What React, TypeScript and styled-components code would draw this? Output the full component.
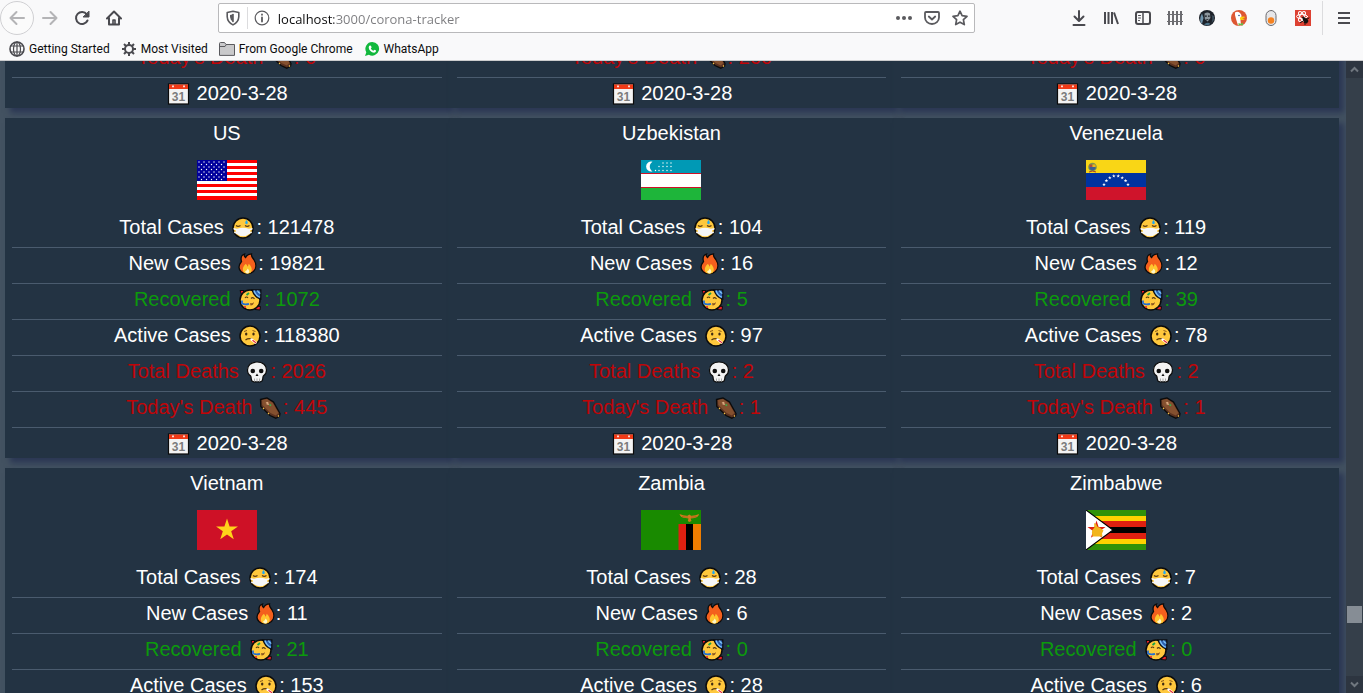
import React, { useLayoutEffect, useRef } from "react";
import styled, { createGlobalStyle } from "styled-components";

const GlobalStyle = createGlobalStyle`
  * { box-sizing: border-box; }
  body { margin: 0; background: #f9f9fa; overflow: hidden; }
`;

const uiFont = `"Open Sans", "Noto Sans", sans-serif`;

/* ---------- browser chrome ---------- */

const Shell = styled.div`
  display: flex;
  flex-direction: column;
  height: 100vh;
`;

const Chrome = styled.header`
  flex: none;
  background: #f9f9fa;
  border-bottom: 1px solid #ccccce;
  font-family: ${uiFont};
`;

const NavBar = styled.nav`
  display: flex;
  align-items: center;
  height: 36px;
`;

const ToolButton = styled.button<{ $round?: boolean }>`
  display: flex;
  flex: none;
  align-items: center;
  justify-content: center;
  width: ${(p) => (p.$round ? 34 : 32)}px;
  height: ${(p) => (p.$round ? 34 : 32)}px;
  padding: 0;
  border: ${(p) => (p.$round ? "1px solid #d0d0d3" : "0")};
  border-radius: ${(p) => (p.$round ? "50%" : "2px")};
  background: ${(p) => (p.$round ? "#fbfbfb" : "transparent")};
`;

const Spacer = styled.div`
  flex: 88 1 0;
`;

const UrlBar = styled.div`
  display: flex;
  flex: 757 1 0;
  align-items: center;
  height: 30px;
  border: 1px solid #b9b9bb;
  border-radius: 2px;
  background: #fff;
`;

const UrlButton = styled.button`
  display: flex;
  flex: none;
  align-items: center;
  justify-content: center;
  width: 28px;
  height: 28px;
  padding: 0;
  border: 0;
  background: transparent;
`;

const UrlDivider = styled.span`
  width: 1px;
  height: 22px;
  background: #dcdcde;
`;

const UrlInput = styled.input`
  flex: 1;
  min-width: 0;
  height: 28px;
  padding: 2px 2px 0;
  border: 0;
  outline: 0;
  font-family: ${uiFont};
  font-size: 13px;
  color: transparent;
  background: linear-gradient(90deg, #0c0c0d 58px, #7b7b7e 58px);
  background-clip: text;
  -webkit-background-clip: text;
`;

const MenuDivider = styled.span`
  width: 1px;
  height: 34px;
  margin: 0 5px 0 3px;
  background: #dcdcde;
`;

const MenuEnd = styled.span`
  flex: none;
  width: 3px;
`;

const Bookmarks = styled.div`
  display: flex;
  align-items: center;
  gap: 11px;
  height: 24px;
  padding: 2px 0 0 9px;
`;

const Bookmark = styled.a`
  display: flex;
  align-items: center;
  gap: 4px;
  font-family: Roboto, sans-serif;
  font-size: 12px;
  line-height: 16px;
  white-space: nowrap;
  color: #0c0c0d;
  text-decoration: none;
`;

/* ---------- page ---------- */

const Viewport = styled.div`
  display: flex;
  flex: 1;
  min-height: 0;
`;

const ScrollPane = styled.main`
  flex: 1;
  min-width: 0;
  overflow: hidden;
  background: #435261;
`;

const CardGrid = styled.section`
  display: grid;
  grid-template-columns: repeat(3, 1fr);
  row-gap: 10px;
  padding: 0 7px 10px 5px;
`;

const Card = styled.article`
  padding: 0 8px 0 7px;
  background: #233343;
  box-shadow: 5px 5px 6px #2b3754;
  font-family: "Liberation Sans", Arial, sans-serif;
  font-size: 20px;
  line-height: 30px;
  text-align: center;
  color: #fff;
`;

const CountryName = styled.h2`
  margin: 0;
  font-size: 20px;
  font-weight: 400;
  line-height: 30px;
`;

const FlagBox = styled.svg`
  display: block;
  width: 60px;
  height: 40px;
  margin: 12px auto;
`;

const StatRow = styled.p<{ $color?: string }>`
  margin: 0;
  padding-bottom: 5px;
  border-bottom: 1px solid #4a5b6e;
  white-space: nowrap;
  color: ${(p) => p.$color || "#fff"};
`;

const DateRow = styled.p`
  margin: 0;
`;

const Emoji = styled.svg<{ $width?: number }>`
  width: ${(p) => p.$width || 25}px;
  height: 22px;
  vertical-align: -5px;
`;

const ScrollTrack = styled.div`
  display: flex;
  flex: none;
  flex-direction: column;
  width: 17px;
  background: #353f4a;
`;

const ScrollButton = styled.button`
  display: flex;
  align-items: center;
  justify-content: center;
  height: 17px;
  padding: 0;
  border: 0;
  background: #2d3540;
`;

const ScrollLane = styled.div`
  display: flex;
  flex: 1;
  flex-direction: column;
`;

const ScrollGap = styled.div<{ $grow: number }>`
  flex: ${(p) => p.$grow} 1 0;
`;

const ScrollThumb = styled.div`
  height: 17px;
  margin: 0 1px;
  background: #868d95;
`;

/* ---------- emoji drawings ---------- */

const Face = () => (
  <circle cx="12" cy="11" r="10" fill="#ffc83d" stroke="#0b0b0b" strokeWidth="1.5" />
);

const MaskIcon = () => (
  <Emoji $width={27} viewBox="-2 0 27 22" aria-hidden="true">
    <Face />
    <path d="M5 8.500q2 1.600 4.500 0M14 8.500q2.200 1.600 4.500 0" fill="none" stroke="#5b3a12" strokeWidth="1.200" />
    <path d="M2.500 11l3.500.8q6-2.300 12 0l3.500-.8v1.500L19 13.500v3q-7 5.600-14 0v-3l-2.500-1z" fill="#f6f6f6" />
    <path d="M3.200 15.200l3 .8M20.800 15.200l-3 .8" stroke="#f6f6f6" strokeWidth="1.500" />
    <path d="M15.500 3q2.600 3.500 0 4.200q-2.600-.7 0-4.200z" fill="#20a8f4" />
  </Emoji>
);

const FireIcon = () => (
  <Emoji $width={22} viewBox="-1 0 22 22" aria-hidden="true">
    <path d="M4.500 8.500C3.500 5 4.500 2 7.500 1c-.6 1.600.2 3 1 3.600C9.500 2.500 12 .9 14.500.8c-.6 2.400.8 3.600 2.300 5.700 2.700 4.200 2.700 9-.4 12-3.200 2.900-9.200 2.900-12.200.2C1.200 15.900 1.600 12 4.500 8.500z" fill="#f4601d" stroke="#0b0b0b" strokeWidth="1.300" />
    <path d="M8.500 11c1.500.2 1.700 1.800 1.800 2.800 1-1 1.400-1.900 1.200-3.100 2.700 2 4.400 6 2.500 8.500-2 2-5.800 2-7.500-.1-1.500-2.300-.6-5.600 2-8.100z" fill="#ffc52e" />
    <path d="M10.500 15.500c2 1.800 2.500 3.600.9 4.800-1.800.5-3.500-.5-3.100-2.300.8.200 2-.8 2.200-2.500z" fill="#fff6c8" />
  </Emoji>
);

const PartyIcon = () => (
  <Emoji $width={28} viewBox="-2 0 28 22" aria-hidden="true">
    <path d="M2 1.500h4l-2 5zM19 17l3.500.5-.5 3.500-5-.5z" fill="#e8202a" stroke="#0b0b0b" />
    <Face />
    <path d="M14 .8h8.800v9.400q-7-2.200-8.800-9.400z" fill="#2c5fb0" stroke="#0b0b0b" strokeWidth="1.200" />
    <path d="M16 1.500q1.500 5 6 6.800M19.500 1.500q.6 2 2.800 3" stroke="#82c5f5" strokeWidth="1.200" fill="none" />
    <path d="M7 9q1.500-2 3 0M13 9.500q1.800-2 3.500.5" fill="none" stroke="#5b3a12" strokeWidth="1.200" />
    <path d="M4 11.500v3q3 1.500 7 .3" fill="none" stroke="#246fd1" strokeWidth="1.800" />
    <path d="M12 14q2.500 1 4-1-.5 3.500-3.500 3.500z" fill="#8a5520" />
    <path d="M8.500 6l2.500-2" stroke="#19a348" strokeWidth="1.800" />
    <circle cx="7" cy="18" r="1" fill="#e8202a" />
  </Emoji>
);

const SickIcon = () => (
  <Emoji $width={27} viewBox="-2 0 27 22" aria-hidden="true">
    <Face />
    <path d="M6 6.500l3-1M14.500 5.500l3 1" stroke="#8a5b1b" />
    <ellipse cx="8.200" cy="9" rx="1.200" ry="1.600" fill="#3f2a12" />
    <ellipse cx="15.500" cy="9" rx="1.200" ry="1.600" fill="#3f2a12" />
    <path d="M7.500 15q3-2.200 6.500-.8" fill="none" stroke="#5b3a12" strokeWidth="1.300" />
    <path d="M13.500 14.500l4 3" stroke="#fff" strokeWidth="2.400" strokeLinecap="round" />
    <path d="M14.500 15.300l3.500 2.500" stroke="#e52b35" strokeWidth="1.200" />
  </Emoji>
);

const SkullIcon = () => (
  <Emoji $width={26} viewBox="-1 0 26 22" aria-hidden="true">
    <path d="M12 1c-6 0-9.500 3.500-9.500 8 0 2.800.8 4.500 3 5.800.6.500.5 1.500.8 3.200.2 1.500 1 2.800 2.500 2.800h6.400c1.500 0 2.300-1.300 2.500-2.800.3-1.700.2-2.700.8-3.200 2.200-1.300 3-3 3-5.800 0-4.500-3.500-8-9.500-8z" fill="#f3f3f3" stroke="#0b0b0b" strokeWidth="1.200" />
    <circle cx="7.800" cy="10" r="2.300" fill="#101010" />
    <circle cx="16.200" cy="10" r="2.300" fill="#101010" />
    <path d="M12 12.500l1.500 2.500h-3z" fill="#101010" />
    <path d="M9.500 17.500v3M12 17.500v3M14.500 17.500v3" stroke="#aaa" />
  </Emoji>
);

const CoffinIcon = () => (
  <Emoji viewBox="0 0 25 22" aria-hidden="true">
    <path d="M2.500 2.500L9 .9l6.500 4L22 16.500l-.5 2.700-3.700 2L12 18.500 2.800 9.500z" fill="#5b3220" stroke="#0b0b0b" strokeWidth="1.300" />
    <path d="M4 3l5-1 5.800 4L20.500 16l-2.700 2.500L12.500 16 4.300 8z" fill="#84502f" />
    <path d="M8 5.500l3 2M10 5L8.800 7.500" stroke="#d8a77f" strokeWidth="1.200" />
    <path d="M11.500 7.500l1.500 1.200" stroke="#35b44a" strokeWidth="1.600" />
    <path d="M5 11l1 1M10 16l1 1M20 19.500l1-1" stroke="#f2c14b" strokeWidth="1.200" />
  </Emoji>
);

const CalendarIcon = () => (
  <Emoji viewBox="0 0 25 22" aria-hidden="true">
    <rect x="2.500" y="1" width="20" height="20" fill="#f3f3f3" stroke="#0b0b0b" strokeWidth="1.200" />
    <rect x="3" y="1.500" width="19" height="4.500" fill="#f03a17" />
    <path d="M7 2.500v1.800M18 2.500v1.800" stroke="#fff" strokeWidth="1.600" />
    <text x="12.500" y="17.500" textAnchor="middle" fontFamily="Liberation Sans, Arial, sans-serif" fontSize="12" fontWeight="700" fill="#7c7c7c">31</text>
  </Emoji>
);

/* ---------- flags ---------- */

const starPath = (cx: number, cy: number, r: number, turn = 0) => {
  const pts: string[] = [];
  for (let i = 0; i < 10; i++) {
    const a = ((i * 36 - 90 + turn) * Math.PI) / 180;
    const k = i % 2 ? r * 0.382 : r;
    pts.push(`${(cx + k * Math.cos(a)).toFixed(2)},${(cy + k * Math.sin(a)).toFixed(2)}`);
  }
  return `M${pts.join("L")}Z`;
};

const usStars: [number, number][] = [];
for (let r = 0; r < 8; r++) {
  for (let c = 0; c < (r % 2 ? 5 : 6); c++) usStars.push([2 + c * 5 + (r % 2 ? 2.5 : 0), 2 + r * 2.5]);
}

const FlagUS = () => (
  <>
    <rect width="60" height="40" fill="#fff" />
    {[0, 6, 12, 18, 24, 30, 36].map((y) => (
      <rect key={y} y={y} width="60" height={y === 36 ? 4 : 3} fill="#f00" />
    ))}
    <rect width="30" height="21" fill="#00009c" />
    {usStars.map(([x, y]) => (
      <circle key={`${x}-${y}`} cx={x} cy={y} r=".7" fill="#fff" />
    ))}
  </>
);

const FlagUzbekistan = () => (
  <>
    <rect width="60" height="40" fill="#fff" />
    <rect width="60" height="13" fill="#0099b5" />
    <rect y="28" width="60" height="12" fill="#1eb53a" />
    <rect y="13" width="60" height="1" fill="#ce1126" />
    <rect y="27" width="60" height="1" fill="#ce1126" />
    <path d="M11.500 1.800a5 5 0 1 0 0 9.600a5.600 5.600 0 0 1 0-9.600z" fill="#fff" />
    {[[22, 3], [26, 3], [30, 3], [18, 6.5], [22, 6.5], [26, 6.5], [30, 6.5], [14.5, 10.5], [18, 10.5], [22, 10.5], [26, 10.5], [30, 10.5]].map(([x, y]) => (
      <circle key={`${x}-${y}`} cx={x} cy={y} r=".7" fill="#fff" />
    ))}
  </>
);

const FlagVenezuela = () => (
  <>
    <rect width="60" height="13" fill="#f9d616" />
    <rect y="13" width="60" height="14" fill="#0033a0" />
    <rect y="27" width="60" height="13" fill="#cf142b" />
    {[[18, 24.5], [20.4, 20.7], [23.8, 17.8], [27.8, 16], [32.2, 16], [36.2, 17.8], [39.6, 20.7], [42, 24.5]].map(([x, y]) => (
      <path key={x} d={starPath(x, y, 1.9)} fill="#fff" />
    ))}
    <circle cx="6.500" cy="7" r="4.300" fill="#7c9450" />
    <path d="M3.500 4.500h3v2.500h-3z" fill="#b34a38" />
    <path d="M6.500 4.500h3v2.500h-3z" fill="#efb416" />
    <path d="M3.500 7h6v2q-3 2.500-6 0z" fill="#3d5f8f" />
    <path d="M3 12l3.500-1 3.500 1" stroke="#a33c28" fill="none" />
  </>
);

const FlagVietnam = () => (
  <>
    <rect width="60" height="40" fill="#ce1126" />
    <path d={starPath(30, 20, 11.5)} fill="#ffd21a" />
  </>
);

const FlagZambia = () => (
  <>
    <rect width="60" height="40" fill="#198a00" />
    <rect x="37.500" y="14" width="7.500" height="26" fill="#de2010" />
    <rect x="45" y="14" width="7" height="26" fill="#000" />
    <rect x="52" y="14" width="8" height="26" fill="#ef7d00" />
    <path d="M38.500 4q4 2 8 1.800l1.800-1.300 1.800 1.300q4 .2 8-1.800-1 4-6 4.200l-2.500.3.900 2.500-2.200 1-1.500-1 .7-2.500-3-.4Q39.500 8 38.500 4z" fill="#cf7a1c" />
    <path d="M41 6.500q3 1 6 .5M50 7q3 .5 5.500-.5" stroke="#9a5f14" strokeWidth=".6" fill="none" />
  </>
);

const FlagZimbabwe = () => (
  <>
    <rect width="60" height="40" fill="#319208" />
    <rect y="6" width="60" height="28" fill="#ffd200" />
    <rect y="11" width="60" height="18" fill="#de2010" />
    <rect y="17" width="60" height="6" fill="#000" />
    <path d="M0 0L27 20L0 40z" fill="#fff" />
    <path d="M0 0L27 20L0 40" fill="none" stroke="#000" strokeWidth="1.100" />
    <path d={starPath(10.5, 20, 9.5)} fill="#de2010" />
    <path d="M8 13l2.500 1.500q.5 3 3 3l4 3-1.500 3 .5 3H6.500l-.6-4q.3-3.500 2.600-5z" fill="#f2b51c" />
  </>
);

const Blank = () => <rect width="60" height="40" fill="#fff" />;

/* ---------- data ---------- */

type Country = {
  name: string;
  flag: React.FC;
  total: number;
  fresh: number;
  recovered: number;
  active: number;
  deaths: number;
  today: number;
};

const countries: Country[] = [
  { name: "UAE", flag: Blank, total: 468, fresh: 63, recovered: 52, active: 414, deaths: 2, today: 0 },
  { name: "UK", flag: Blank, total: 17089, fresh: 2546, recovered: 135, active: 15935, deaths: 1019, today: 260 },
  { name: "Uruguay", flag: Blank, total: 274, fresh: 36, recovered: 0, active: 274, deaths: 0, today: 0 },
  { name: "US", flag: FlagUS, total: 121478, fresh: 19821, recovered: 1072, active: 118380, deaths: 2026, today: 445 },
  { name: "Uzbekistan", flag: FlagUzbekistan, total: 104, fresh: 16, recovered: 5, active: 97, deaths: 2, today: 1 },
  { name: "Venezuela", flag: FlagVenezuela, total: 119, fresh: 12, recovered: 39, active: 78, deaths: 2, today: 1 },
  { name: "Vietnam", flag: FlagVietnam, total: 174, fresh: 11, recovered: 21, active: 153, deaths: 0, today: 0 },
  { name: "Zambia", flag: FlagZambia, total: 28, fresh: 6, recovered: 0, active: 28, deaths: 0, today: 0 },
  { name: "Zimbabwe", flag: FlagZimbabwe, total: 7, fresh: 2, recovered: 0, active: 6, deaths: 1, today: 0 },
];

const green = "#0c9a0c";
const red = "#c00508";

const CountryCard = ({ c }: { c: Country }) => {
  const Flag = c.flag;
  return (
    <Card>
      <CountryName>{c.name}</CountryName>
      <FlagBox viewBox="0 0 60 40" role="img" aria-label={`Flag of ${c.name}`}>
        <Flag />
      </FlagBox>
      <StatRow>Total Cases <MaskIcon />: {c.total}</StatRow>
      <StatRow>New Cases <FireIcon />: {c.fresh}</StatRow>
      <StatRow $color={green}>Recovered <PartyIcon />: {c.recovered}</StatRow>
      <StatRow>Active Cases <SickIcon />: {c.active}</StatRow>
      <StatRow $color={red}>Total Deaths <SkullIcon />: {c.deaths}</StatRow>
      <StatRow $color={red}>Today's Death <CoffinIcon />: {c.today}</StatRow>
      <DateRow><CalendarIcon /> 2020-3-28</DateRow>
    </Card>
  );
};

/* ---------- toolbar icons ---------- */

const Ico = ({ children, color = "#4a4a4f", w = 2 }: { children: React.ReactNode; color?: string; w?: number }) => (
  <svg width="16" height="16" viewBox="0 0 16 16" fill="none" stroke={color} strokeWidth={w} strokeLinecap="round" strokeLinejoin="round" aria-hidden="true">
    {children}
  </svg>
);

const navButtons = [
  { label: "Back", round: true, icon: <Ico color="#b4b4b6"><path d="M15 8H1.500M7.500 2L1.500 8l6 6" /></Ico> },
  { label: "Forward", icon: <Ico color="#b4b4b6"><path d="M1 8h13.500M8.500 2l6 6-6 6" /></Ico> },
  { label: "Reload", icon: <Ico><path d="M13.500 10.500A6 6 0 1 1 12.800 4.400" /><path d="M15 1.500v5.500h-5.500z" fill="#4a4a4f" strokeWidth="1" /></Ico> },
  { label: "Home", icon: <Ico><path d="M1 8.500L8 1.500l7 7M3 8v6.500h10V8" /><path d="M7 14v-4h2v4" strokeWidth="1.600" /></Ico> },
];

const toolButtons = [
  { label: "Downloads", icon: <Ico><path d="M8 1v9.500M3.500 6.500L8 11l4.500-4.500M2.500 15h11" /></Ico> },
  { label: "Library", icon: <Ico><path strokeLinecap="butt" d="M2 2v12M5.500 2v12M9 2v12M11 2.500l4 11.500" /></Ico> },
  { label: "Sidebars", icon: <Ico><rect x="1" y="2" width="14" height="12" rx="2" /><path d="M8 2v12" strokeWidth="1.500" /><path d="M3.500 5.500h2M3.500 8h2M3.500 10.500h1" strokeWidth="1" /></Ico> },
  { label: "Fence", icon: <Ico color="#6c6c70" w={2}><path strokeLinecap="butt" d="M2 1v14M6 1v14M10 1v14M14 1v14" /><path strokeLinecap="butt" strokeWidth="1.200" d="M0 4.500h16M0 11.500h16" /></Ico> },
  {
    label: "Anonymous",
    icon: (
      <Ico w={0}>
        <circle cx="8" cy="8" r="8" fill="#1d2229" />
        <path d="M1.500 12Q.5 8 3 3.500L4.500 8 3 14z" fill="#6f93ab" />
        <path d="M5.500 3.500q3-2 5.500 0l.4 4.500-2.700 3.500L5.800 9z" fill="#8d979e" />
        <path d="M6 5.500h1.800v1.200H6zM9 5.500h1.700v1.200H9zM7.300 9h2v.8h-2z" fill="#14181c" />
        <path d="M12.500 5q1.500 3 0 8l2.500-3V6z" fill="#3c4d5a" />
        <path d="M5 14.500q3.500-3 6.500-.5l-3 1.500z" fill="#4b7288" />
      </Ico>
    ),
  },
  {
    label: "DuckDuckGo",
    icon: (
      <Ico w={0}>
        <circle cx="8" cy="8" r="8" fill="#de5833" />
        <path d="M4 2.500q2.500-1.500 5 .5 2 1.500 1.500 5l-1 2 .5 5.200H7L5 9Q3.500 5 4 2.500z" fill="#fff" />
        <path d="M9 7.500q3-1.500 5.500-.5-1 1-3.500 1.300 2 .7 3 .7-2 1.500-5 .5z" fill="#fdd20a" />
        <path d="M7.500 13l2 .8 2.500-1v2.700l-2.500-.6-2 .6z" fill="#67bd47" />
        <circle cx="8" cy="5.500" r=".8" fill="#2d4f8e" />
      </Ico>
    ),
  },
  { label: "Switch", icon: <Ico w={1}><rect x="3" y=".5" width="10" height="15" rx="5" fill="#e6e6e8" stroke="#6a6a6e" /><circle cx="8" cy="10.500" r="3.200" fill="#f58220" stroke="none" /></Ico> },
  {
    label: "React inspector",
    icon: (
      <Ico w={1}>
        <rect width="16" height="16" fill="#dd4132" stroke="none" />
        <g stroke="#fff"><ellipse cx="7" cy="6.500" rx="5.500" ry="2.200" /><ellipse cx="7" cy="6.500" rx="5.500" ry="2.200" transform="rotate(60 7 6.500)" /><ellipse cx="7" cy="6.500" rx="5.500" ry="2.200" transform="rotate(120 7 6.500)" /></g>
        <path d="M7 7l2-.5 1 1.500 2 .5 1.500 2.500-1.500 2.500-3-.5L8 10z" fill="#16110f" stroke="none" />
        <path d="M12 9l2-1M7.500 11.500l-2 1M10 13v1.500" stroke="#16110f" />
      </Ico>
    ),
  },
];

const scrollStart = 293;

export default function App() {
  const pane = useRef<HTMLElement>(null);
  useLayoutEffect(() => {
    if (pane.current) pane.current.scrollTop = scrollStart;
  }, []);

  return (
    <>
      <GlobalStyle />
      <Shell>
        <Chrome>
          <NavBar aria-label="Browser toolbar">
            {navButtons.map((b) => (
              <ToolButton key={b.label} $round={b.round} aria-label={b.label}>{b.icon}</ToolButton>
            ))}
            <Spacer />
            <UrlBar>
              <UrlButton aria-label="Tracking protection">
                <Ico w={1.6} color="#5a5a5e"><path d="M8 1.200l5.800 1.300v4.300Q13.500 12.300 8 14.900 2.500 12.300 2.200 6.800V2.500z" /><path d="M8 4.200l-3 .7v2Q5.200 10 8 11.700z" fill="#5a5a5e" stroke="none" /><path d="M8 4.500v7" /></Ico>
              </UrlButton>
              <UrlDivider />
              <UrlButton aria-label="Site information">
                <Ico w={1.2} color="#5a5a5e"><circle cx="8" cy="8" r="6.800" /><path d="M8 7.500v4M8 4.500v.3" strokeWidth="1.800" /></Ico>
              </UrlButton>
              <UrlInput aria-label="Address" defaultValue="localhost:3000/corona-tracker" />
              <UrlButton aria-label="Page actions">
                <Ico w={0}><g fill="#5a5a5e"><circle cx="2" cy="8" r="2" /><circle cx="8" cy="8" r="2" /><circle cx="14" cy="8" r="2" /></g></Ico>
              </UrlButton>
              <UrlButton aria-label="Save to Pocket">
                <Ico w={1.8} color="#5a5a5e"><path d="M2 2h12q1 0 1 1v4.500a7 6.500 0 0 1-14 0V3q0-1 1-1z" /><path d="M4.800 6.500L8 9.500l3.200-3" /></Ico>
              </UrlButton>
              <UrlButton aria-label="Bookmark this page">
                <Ico w={1.7} color="#5a5a5e"><path d="M8 1.200l2.100 4.500 4.900.6-3.600 3.400.9 4.900L8 12.200l-4.300 2.400.9-4.900L1 6.300l4.900-.6z" /></Ico>
              </UrlButton>
            </UrlBar>
            <Spacer />
            {toolButtons.map((b) => (
              <ToolButton key={b.label} aria-label={b.label}>{b.icon}</ToolButton>
            ))}
            <MenuDivider />
            <ToolButton aria-label="Menu"><Ico><path strokeLinecap="butt" d="M2 3h12M2 8h12M2 13h12" /></Ico></ToolButton>
            <MenuEnd />
          </NavBar>
          <Bookmarks>
            <Bookmark href="#start">
              <Ico w={1.2}><circle cx="8" cy="8" r="7" strokeWidth="1.600" /><ellipse cx="8" cy="8" rx="3.500" ry="7" /><path d="M8 1v14M2 5h12M2 11h12" /></Ico>
              Getting Started
            </Bookmark>
            <Bookmark href="#most">
              <Ico><circle cx="8" cy="8" r="4" /><path strokeLinecap="butt" d="M8 1v3M8 12v3M1 8h3M12 8h3M3 3l2.200 2.200M10.800 10.800L13 13M13 3l-2.200 2.200M5.200 10.800L3 13" /></Ico>
              Most Visited
            </Bookmark>
            <Bookmark href="#chrome">
              <Ico w={1} color="#5a5a5e"><path d="M.5 14V2.500q0-1 1-1h4l1.500 2h8.500V14z" fill="#c9c9cb" /><path d="M.5 5.500H6l1-1.500" /></Ico>
              From Google Chrome
            </Bookmark>
            <Bookmark href="#whatsapp">
              <Ico w={0}><path d="M8.200 1a6.800 6.800 0 1 1-3.300 12.700L1 15l1.300-3.800A6.800 6.800 0 0 1 8.200 1z" fill="#12b83d" /><path d="M5.800 4.500l1.200.2.600 1.700-.8 1q1 1.700 2.600 2.300l1-1 1.700.9q.1 2-2 2.200Q5.500 11 4.700 6.800q0-1.700 1.100-2.300z" fill="#fff" /></Ico>
              WhatsApp
            </Bookmark>
          </Bookmarks>
        </Chrome>
        <Viewport>
          <ScrollPane ref={pane}>
            <CardGrid>
              {countries.map((c) => (
                <CountryCard key={c.name} c={c} />
              ))}
            </CardGrid>
          </ScrollPane>
          <ScrollTrack>
            <ScrollButton aria-label="Scroll up">
              <svg width="9" height="9" viewBox="0 0 9 9" fill="none" stroke="#70777f" strokeWidth="2"><path d="M1 6.500l3.500-3.500L8 6.500" /></svg>
            </ScrollButton>
            <ScrollLane>
              <ScrollGap $grow={528} />
              <ScrollThumb />
              <ScrollGap $grow={53} />
            </ScrollLane>
            <ScrollButton aria-label="Scroll down">
              <svg width="9" height="9" viewBox="0 0 9 9" fill="none" stroke="#70777f" strokeWidth="2"><path d="M1 2.500l3.500 3.500L8 2.500" /></svg>
            </ScrollButton>
          </ScrollTrack>
        </Viewport>
      </Shell>
    </>
  );
}
